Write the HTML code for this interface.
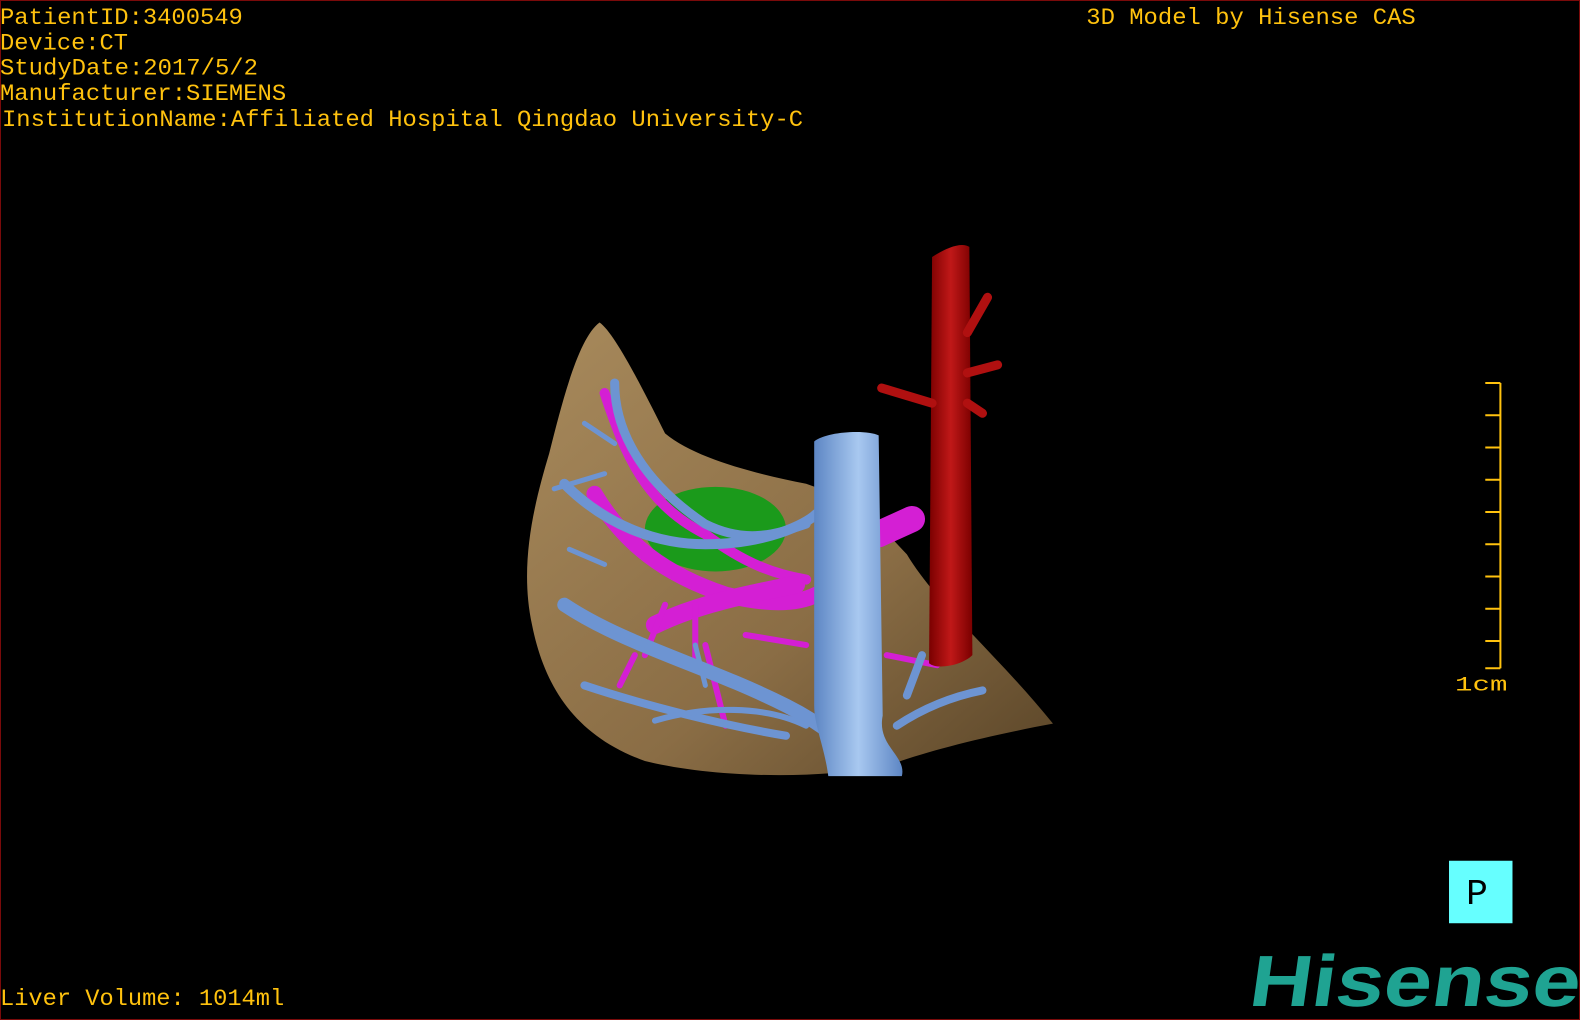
<!DOCTYPE html>
<html><head><meta charset="utf-8"><style>
html,body{margin:0;padding:0;background:#000;width:1580px;height:1020px;overflow:hidden}
svg{display:block}
text{font-family:"Liberation Mono","DejaVu Sans Mono",monospace;fill:#ffc20e}
</style></head><body>
<svg width="1580" height="1020" viewBox="0 0 1568 1012" preserveAspectRatio="none">
<defs>
<linearGradient id="lv" x1="0" y1="0" x2="1" y2="1"><stop offset="0" stop-color="#a88a5c"/><stop offset="0.6" stop-color="#8a6d45"/><stop offset="1" stop-color="#5a4528"/></linearGradient>
<linearGradient id="vc" x1="0" x2="1"><stop offset="0" stop-color="#5d86c4"/><stop offset="0.5" stop-color="#a8c8f0"/><stop offset="1" stop-color="#5d86c4"/></linearGradient>
<linearGradient id="ao" x1="0" x2="1"><stop offset="0" stop-color="#7a0000"/><stop offset="0.5" stop-color="#c01818"/><stop offset="1" stop-color="#7a0000"/></linearGradient>
</defs>
<rect x="0.5" y="0.5" width="1567" height="1011" fill="#000" stroke="#7a0a0a"/>
<text x="0" y="24" font-size="23" textLength="241" lengthAdjust="spacingAndGlyphs">PatientID:3400549</text>
<text x="0" y="49" font-size="23" textLength="127" lengthAdjust="spacingAndGlyphs">Device:CT</text>
<text x="0" y="74" font-size="23" textLength="256" lengthAdjust="spacingAndGlyphs">StudyDate:2017/5/2</text>
<text x="0" y="99" font-size="23" textLength="284" lengthAdjust="spacingAndGlyphs">Manufacturer:SIEMENS</text>
<text x="2" y="125" font-size="23" textLength="795" lengthAdjust="spacingAndGlyphs">InstitutionName:Affiliated Hospital Qingdao University-C</text>
<text x="1078" y="24" font-size="23" textLength="327" lengthAdjust="spacingAndGlyphs">3D Model by Hisense CAS</text>
<text x="0" y="997" font-size="23" textLength="282" lengthAdjust="spacingAndGlyphs">Liver Volume: 1014ml</text>
<!-- liver -->
<path d="M595 320 C610 330 640 390 660 430 C690 455 750 470 800 480 C860 500 880 530 900 550 C930 600 990 650 1045 718 C980 730 920 745 880 760 C800 775 700 770 640 755 C570 730 540 680 528 620 C515 560 530 500 545 450 C560 390 575 335 595 320Z" fill="url(#lv)"/>
<!-- green -->
<ellipse cx="710" cy="525" rx="70" ry="42" fill="#1b9a1b"/>
<!-- magenta -->
<g stroke="#d41fd4" fill="none" stroke-linecap="round">
<path d="M872 530 L905 515" stroke-width="26"/>
<path d="M600 390 C620 450 640 500 700 530 C740 560 770 570 800 575" stroke-width="10"/>
<path d="M590 490 C620 540 660 570 720 590 C760 600 790 600 810 590" stroke-width="16"/>
<path d="M650 620 C690 600 740 590 790 580" stroke-width="18"/>
<path d="M660 600 L640 650 M690 600 L690 660 M700 640 L720 720 M740 630 L800 640 M630 650 L615 680 M880 650 L930 660" stroke-width="6"/>
</g>
<!-- blue branches -->
<g stroke="#6d94d2" fill="none" stroke-linecap="round">
<path d="M610 380 C610 430 640 480 700 520 C740 540 770 530 800 520" stroke-width="9"/>
<path d="M560 480 C600 520 650 540 700 540 C760 540 800 520 810 510" stroke-width="10"/>
<path d="M560 600 C620 640 700 660 780 700 C820 720 840 740 860 760" stroke-width="14"/>
<path d="M580 680 C640 700 720 720 780 730" stroke-width="8"/>
<path d="M650 715 C700 700 760 700 800 720" stroke-width="6"/>
<path d="M580 420 L610 440 M550 485 L600 470 M565 545 L600 560 M600 620 L640 640 M690 640 L700 680" stroke-width="5"/>
<path d="M890 720 C920 700 950 690 975 685 M900 690 L915 650" stroke-width="8"/>
</g>
<!-- vena cava -->
<path d="M808 438 C820 428 860 426 872 432 L876 710 C870 740 900 750 895 770 L822 770 C818 740 808 720 808 700Z" fill="url(#vc)"/>
<!-- aorta -->
<path d="M925 255 C940 245 955 240 962 245 L965 650 C955 660 930 665 922 658 Z" fill="url(#ao)"/>
<path d="M875 385 L925 400 M960 370 L990 362 M960 330 L980 295 M960 400 L975 410" stroke="#b01010" stroke-width="9" stroke-linecap="round"/>
<!-- scale -->
<g stroke="#ffc20e" stroke-width="2" fill="none">
<path d="M1489 380 V663"/>
<path d="M1474 380H1489M1474 412H1489M1474 444H1489M1474 476H1489M1474 508H1489M1474 540H1489M1474 572H1489M1474 604H1489M1474 636H1489M1474 663H1489"/>
</g>
<text x="1444" y="685" font-size="20" font-family="Liberation Sans" textLength="52" lengthAdjust="spacingAndGlyphs">1cm</text>
<rect x="1438" y="854" width="63" height="62" fill="#66ffff"/>
<text x="1455" y="897" font-size="36" style="fill:#000">P</text>
<text x="1238" y="998" font-size="72" font-weight="bold" transform="skewX(-8) translate(140,0)" style="fill:#1fa392;font-family:'Liberation Sans',sans-serif" textLength="328" lengthAdjust="spacingAndGlyphs">Hisense</text>
</svg>
</body></html>
